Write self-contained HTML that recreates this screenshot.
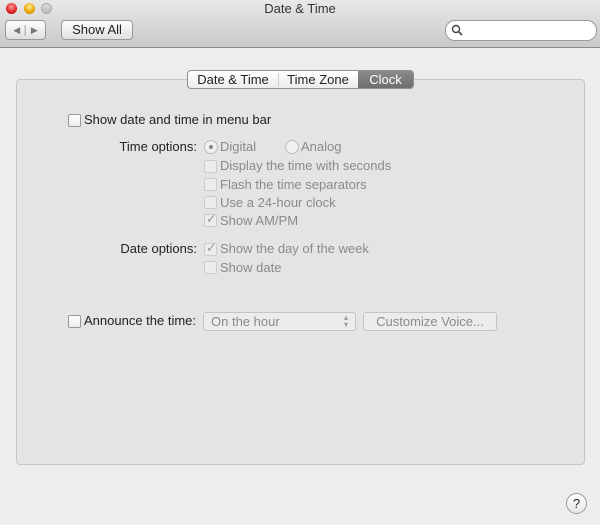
<!DOCTYPE html><html><head><style>
body{margin:0;width:600px;height:525px;background:#ededed;font-family:"Liberation Sans",sans-serif;font-size:13px;color:#222;position:relative;overflow:hidden}
.a{position:absolute;white-space:nowrap}
.tb{position:absolute;left:0;top:0;width:600px;height:47px;background:linear-gradient(#e8e8e8,#c9c9c9);border-bottom:1px solid #8a8a8a}
.dot{position:absolute;top:3px;width:11px;height:11px;border-radius:50%}
.btn{position:absolute;border:1px solid #999;border-radius:4px;background:linear-gradient(#fdfdfd,#e0e0e0);box-sizing:border-box;text-align:center}
.cb{position:absolute;width:11px;height:11px;border:1px solid #999;border-radius:2px;background:linear-gradient(#fff,#eee)}
.g .cb{border-color:#ccc;background:#ececec}
.g{color:#8a8a8a}
.ck{position:absolute;left:1px;top:-4px;font-size:13px;color:#999}
</style></head><body>
<div class="tb"></div>
<div class="dot" style="left:6px;background:radial-gradient(circle at 50% 35%,#f99,#d22 60%,#a00)"></div>
<div class="dot" style="left:24px;background:radial-gradient(circle at 50% 35%,#fe9,#e9a000 60%,#b70)"></div>
<div class="dot" style="left:41px;background:linear-gradient(#ddd,#bbb);border:1px solid #aaa;width:9px;height:9px"></div>
<div class="a" style="left:0;width:600px;text-align:center;top:1px;font-size:13px;color:#333">Date &amp; Time</div>
<div class="btn" style="left:5px;top:20px;width:41px;height:20px;font-size:9px;color:#777;line-height:18px">◀ │ ▶</div>
<div class="btn" style="left:61px;top:20px;width:72px;height:20px;line-height:18px;font-size:13px">Show All</div>
<div class="a" style="left:445px;top:20px;width:150px;height:19px;border:1px solid #999;border-radius:10px;background:#fff"></div>
<svg class="a" style="left:451px;top:24px" width="12" height="12"><circle cx="5" cy="5" r="3.5" fill="none" stroke="#444" stroke-width="1.4"/><path d="M7.5 7.5L11 11" stroke="#444" stroke-width="1.6"/></svg>
<div class="a" style="left:16px;top:79px;width:567px;height:384px;border:1px solid #c6c6c6;border-radius:4px;background:#e4e4e4"></div>
<div class="a" style="left:187px;top:70px;width:225px;height:17px;border:1px solid #8f8f8f;border-radius:4px;background:linear-gradient(#fff,#ececec);overflow:hidden;font-size:13px;line-height:17px">
<span class="a" style="left:0;width:90px;text-align:center">Date &amp; Time</span>
<span class="a" style="left:90px;top:2px;height:13px;border-left:1px solid #ccc"></span>
<span class="a" style="left:90px;width:80px;text-align:center">Time Zone</span>
<span class="a" style="left:170px;width:55px;height:17px;background:linear-gradient(#8a8a8a,#6e6e6e);color:#fff;text-align:center">Clock</span></div>
<div class="cb" style="left:68px;top:114px"></div><div class="a" style="left:84px;top:112px">Show date and time in menu bar</div>
<div class="a" style="left:80px;width:117px;text-align:right;top:139px">Time options:</div>
<div class="a" style="left:80px;width:117px;text-align:right;top:241px">Date options:</div>
<div class="g">
<div class="a" style="left:204px;top:140px;width:12px;height:12px;border:1px solid #bbb;border-radius:50%;background:#f0f0f0"></div><div class="a" style="left:209px;top:145px;width:4px;height:4px;border-radius:50%;background:#888"></div>
<div class="a" style="left:220px;top:139px">Digital</div>
<div class="a" style="left:285px;top:140px;width:12px;height:12px;border:1px solid #bbb;border-radius:50%;background:#f0f0f0"></div>
<div class="a" style="left:301px;top:139px">Analog</div>
<div class="cb" style="left:204px;top:160px"></div><div class="a" style="left:220px;top:158px">Display the time with seconds</div>
<div class="cb" style="left:204px;top:178px"></div><div class="a" style="left:220px;top:177px">Flash the time separators</div>
<div class="cb" style="left:204px;top:196px"></div><div class="a" style="left:220px;top:195px">Use a 24-hour clock</div>
<div class="cb" style="left:204px;top:214px"><span class="ck">✓</span></div><div class="a" style="left:220px;top:213px">Show AM/PM</div>
<div class="cb" style="left:204px;top:243px"><span class="ck">✓</span></div><div class="a" style="left:220px;top:241px">Show the day of the week</div>
<div class="cb" style="left:204px;top:261px"></div><div class="a" style="left:220px;top:260px">Show date</div>
<div class="a" style="left:203px;top:312px;width:151px;height:17px;border:1px solid #c4c4c4;border-radius:3px;background:#ececec"></div>
<div class="a" style="left:211px;top:313px;line-height:17px">On the hour</div>
<div class="a" style="left:344px;top:314px;font-size:8px;line-height:7px;color:#999">▴<br>▾</div>
<div class="a" style="left:363px;top:312px;width:132px;height:17px;border:1px solid #c4c4c4;border-radius:3px;background:#ececec;text-align:center;line-height:17px">Customize Voice...</div>
</div>
<div class="cb" style="left:68px;top:315px"></div><div class="a" style="left:84px;top:313px">Announce the time:</div>
<div class="a" style="left:566px;top:493px;width:19px;height:19px;border:1px solid #999;border-radius:50%;background:linear-gradient(#fff,#e6e6e6);text-align:center;line-height:19px;font-size:13px">?</div>
</body></html>
